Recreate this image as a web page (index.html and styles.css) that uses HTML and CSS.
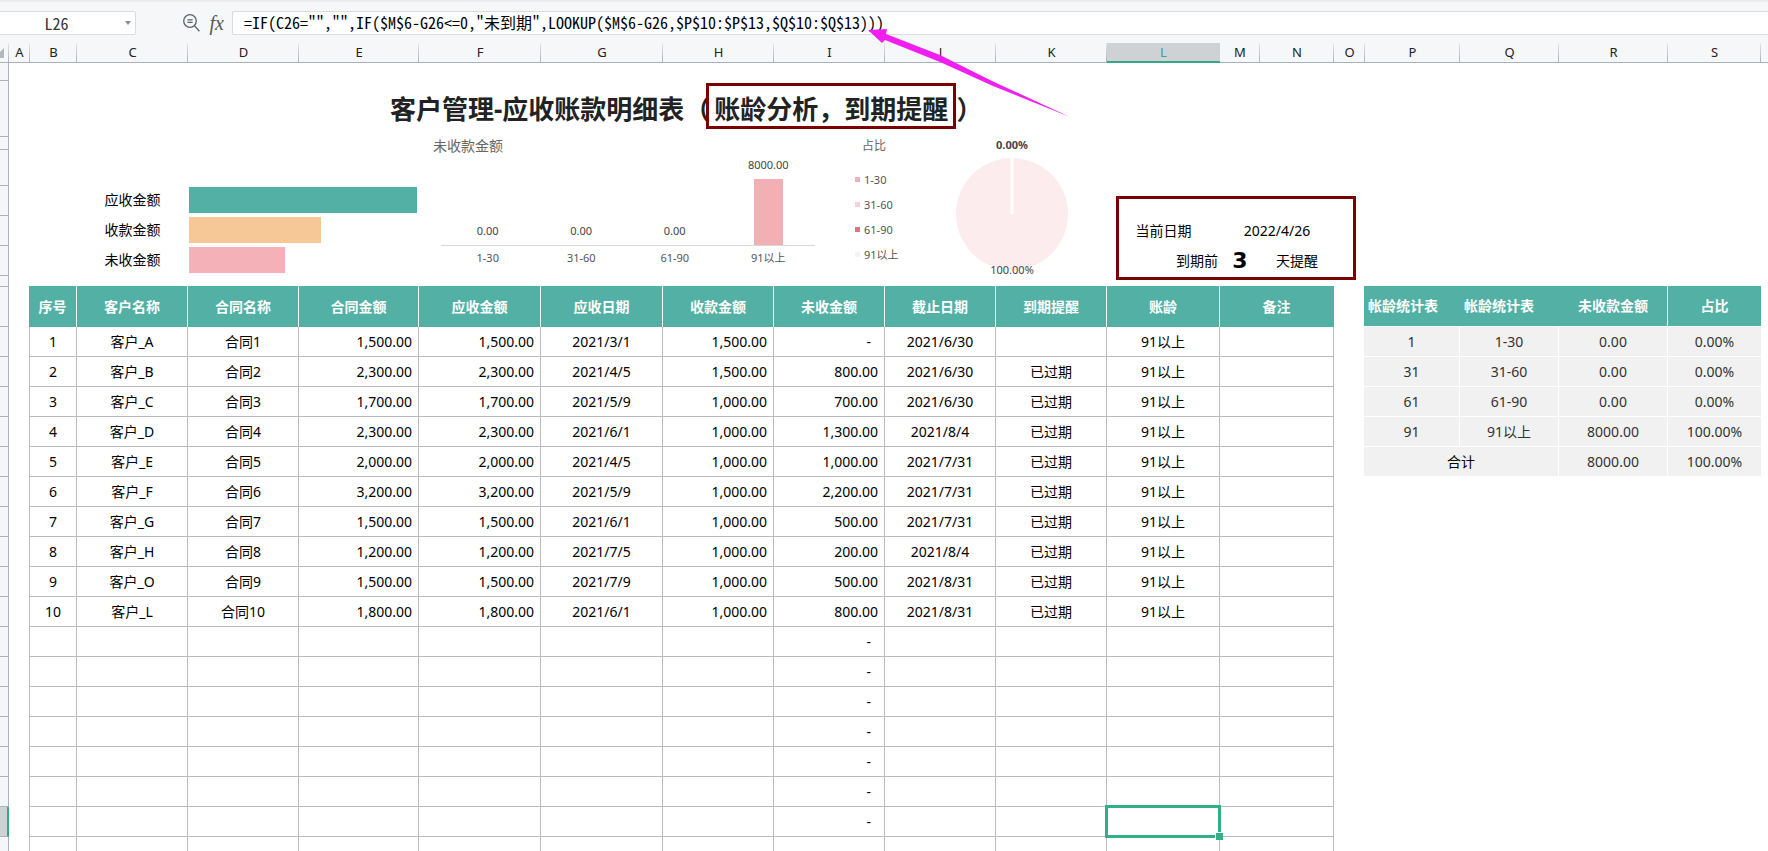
FILE: index.html
```html
<!DOCTYPE html>
<html lang="zh-CN">
<head>
<meta charset="utf-8">
<title>客户管理-应收账款明细表</title>
<link rel="stylesheet" href="styles.css">
</head>
<body>
<div class="app">
  <div class="toolbar">
    <div class="name-box">
      <input class="name-input" type="text" value="L26" aria-label="名称框">
      <button class="name-toggle" type="button" aria-label="展开名称"><svg width="6" height="4" viewBox="0 0 6 4"><path d="M0 0h6L3 4z" fill="#8a8d92"/></svg></button>
    </div>
    <div class="tools">
      <button class="tool" type="button" aria-label="查找"><svg width="17" height="18" viewBox="0 0 17 18" fill="none" stroke="#5d6167" stroke-width="1.3"><circle cx="7" cy="7" r="6.3"/><path d="M11.4 11.6l5 5.6M4.4 5.8h5.2M4.4 8.4h5.2"/></svg></button>
      <button class="tool tool-fx" type="button" aria-label="插入函数">fx</button>
    </div>
    <input class="formula" type="text" aria-label="编辑栏" value="=IF(C26=&quot;&quot;,&quot;&quot;,IF($M$6-G26&lt;=0,&quot;未到期&quot;,LOOKUP($M$6-G26,$P$10:$P$13,$Q$10:$Q$13)))">
  </div>

  <div class="col-heads">
    <div class="corner"><svg width="5" height="10" viewBox="0 0 5 10"><path d="M4 0v10H0V4z" fill="#b4b7bb"/></svg></div>
    <div class="ch">A</div><div class="ch">B</div><div class="ch">C</div><div class="ch">D</div><div class="ch">E</div><div class="ch">F</div><div class="ch">G</div><div class="ch">H</div><div class="ch">I</div><div class="ch">J</div><div class="ch">K</div><div class="ch ch-on">L</div><div class="ch">M</div><div class="ch">N</div><div class="ch">O</div><div class="ch">P</div><div class="ch">Q</div><div class="ch">R</div><div class="ch">S</div><div class="ch ch-last"></div>
  </div>

  <div class="sheet">
    <div class="gutter">
      <div class="rh rh-1"></div><div class="rh rh-2"></div><div class="rh rh-3"></div><div class="rh rh-4"></div><div class="rh"></div><div class="rh"></div><div class="rh"></div><div class="rh rh-8"></div><div class="rh rh-9"></div>
      <div class="rh"></div><div class="rh"></div><div class="rh"></div><div class="rh"></div><div class="rh"></div><div class="rh"></div><div class="rh"></div><div class="rh"></div><div class="rh"></div><div class="rh"></div><div class="rh"></div><div class="rh"></div><div class="rh"></div><div class="rh"></div><div class="rh"></div><div class="rh"></div><div class="rh rh-on"></div><div class="rh"></div>
    </div>
    <main class="content">
      <div class="title-row">
        <h1 class="title">客户管理-应收账款明细表（<span class="boxed">账龄分析，到期提醒</span>）</h1>
      </div>

      <section class="dash">
        <div class="totals">
          <div class="total"><span class="total-name">应收金额</span><div class="track"><div class="bar bar-due" style="width:100%"></div></div></div>
          <div class="total"><span class="total-name">收款金额</span><div class="track"><div class="bar bar-paid" style="width:57.9%"></div></div></div>
          <div class="total"><span class="total-name">未收金额</span><div class="track"><div class="bar bar-open" style="width:42.1%"></div></div></div>
        </div>

        <div class="columns">
          <h2 class="chart-title">未收款金额</h2>
          <div class="plot">
            <div class="slot"><span class="val">0.00</span></div>
            <div class="slot"><span class="val">0.00</span></div>
            <div class="slot"><span class="val">0.00</span></div>
            <div class="slot"><span class="val">8000.00</span><div class="column"></div></div>
          </div>
          <div class="cats"><span>1-30</span><span>31-60</span><span>61-90</span><span>91以上</span></div>
        </div>

        <div class="share">
          <div class="share-side">
            <h2 class="share-title">占比</h2>
            <ul class="legend">
              <li><i class="sw sw-1"></i>1-30</li>
              <li><i class="sw sw-2"></i>31-60</li>
              <li><i class="sw sw-3"></i>61-90</li>
              <li><i class="sw sw-4"></i>91以上</li>
            </ul>
          </div>
          <div class="pie-col">
            <span class="pie-label pie-zero">0.00%</span>
            <svg class="pie" width="112" height="112" viewBox="0 0 112 112"><circle cx="56" cy="56" r="56" fill="#fcecee"/><path d="M56 0v56" stroke="#fff" stroke-width="3"/></svg>
            <span class="pie-label pie-full">100.00%</span>
          </div>
        </div>

        <div class="remind">
          <span class="r-date-name">当前日期</span><span class="r-date">2022/4/26</span>
          <span class="r-before">到期前</span><b class="r-days">3</b><span class="r-after">天提醒</span>
        </div>
      </section>

      <section class="tables">
        <table class="ledger">
          <colgroup><col class="w-b"><col class="w-n"><col class="w-n"><col class="w-e"><col class="w-f"><col class="w-f"><col class="w-n"><col class="w-n"><col class="w-n"><col class="w-n"><col class="w-l"><col class="w-m"></colgroup>
          <thead><tr><th>序号</th><th>客户名称</th><th>合同名称</th><th>合同金额</th><th>应收金额</th><th>应收日期</th><th>收款金额</th><th>未收金额</th><th>截止日期</th><th>到期提醒</th><th>账龄</th><th>备注</th></tr></thead>
          <tbody>
            <tr><td>1</td><td>客户_A</td><td>合同1</td><td class="num">1,500.00</td><td class="num">1,500.00</td><td>2021/3/1</td><td class="num">1,500.00</td><td class="num dash-val">-</td><td>2021/6/30</td><td></td><td>91以上</td><td></td></tr>
            <tr><td>2</td><td>客户_B</td><td>合同2</td><td class="num">2,300.00</td><td class="num">2,300.00</td><td>2021/4/5</td><td class="num">1,500.00</td><td class="num">800.00</td><td>2021/6/30</td><td>已过期</td><td>91以上</td><td></td></tr>
            <tr><td>3</td><td>客户_C</td><td>合同3</td><td class="num">1,700.00</td><td class="num">1,700.00</td><td>2021/5/9</td><td class="num">1,000.00</td><td class="num">700.00</td><td>2021/6/30</td><td>已过期</td><td>91以上</td><td></td></tr>
            <tr><td>4</td><td>客户_D</td><td>合同4</td><td class="num">2,300.00</td><td class="num">2,300.00</td><td>2021/6/1</td><td class="num">1,000.00</td><td class="num">1,300.00</td><td>2021/8/4</td><td>已过期</td><td>91以上</td><td></td></tr>
            <tr><td>5</td><td>客户_E</td><td>合同5</td><td class="num">2,000.00</td><td class="num">2,000.00</td><td>2021/4/5</td><td class="num">1,000.00</td><td class="num">1,000.00</td><td>2021/7/31</td><td>已过期</td><td>91以上</td><td></td></tr>
            <tr><td>6</td><td>客户_F</td><td>合同6</td><td class="num">3,200.00</td><td class="num">3,200.00</td><td>2021/5/9</td><td class="num">1,000.00</td><td class="num">2,200.00</td><td>2021/7/31</td><td>已过期</td><td>91以上</td><td></td></tr>
            <tr><td>7</td><td>客户_G</td><td>合同7</td><td class="num">1,500.00</td><td class="num">1,500.00</td><td>2021/6/1</td><td class="num">1,000.00</td><td class="num">500.00</td><td>2021/7/31</td><td>已过期</td><td>91以上</td><td></td></tr>
            <tr><td>8</td><td>客户_H</td><td>合同8</td><td class="num">1,200.00</td><td class="num">1,200.00</td><td>2021/7/5</td><td class="num">1,000.00</td><td class="num">200.00</td><td>2021/8/4</td><td>已过期</td><td>91以上</td><td></td></tr>
            <tr><td>9</td><td>客户_O</td><td>合同9</td><td class="num">1,500.00</td><td class="num">1,500.00</td><td>2021/7/9</td><td class="num">1,000.00</td><td class="num">500.00</td><td>2021/8/31</td><td>已过期</td><td>91以上</td><td></td></tr>
            <tr><td>10</td><td>客户_L</td><td>合同10</td><td class="num">1,800.00</td><td class="num">1,800.00</td><td>2021/6/1</td><td class="num">1,000.00</td><td class="num">800.00</td><td>2021/8/31</td><td>已过期</td><td>91以上</td><td></td></tr>
            <tr><td></td><td></td><td></td><td></td><td></td><td></td><td></td><td class="num dash-val">-</td><td></td><td></td><td></td><td></td></tr>
            <tr><td></td><td></td><td></td><td></td><td></td><td></td><td></td><td class="num dash-val">-</td><td></td><td></td><td></td><td></td></tr>
            <tr><td></td><td></td><td></td><td></td><td></td><td></td><td></td><td class="num dash-val">-</td><td></td><td></td><td></td><td></td></tr>
            <tr><td></td><td></td><td></td><td></td><td></td><td></td><td></td><td class="num dash-val">-</td><td></td><td></td><td></td><td></td></tr>
            <tr><td></td><td></td><td></td><td></td><td></td><td></td><td></td><td class="num dash-val">-</td><td></td><td></td><td></td><td></td></tr>
            <tr><td></td><td></td><td></td><td></td><td></td><td></td><td></td><td class="num dash-val">-</td><td></td><td></td><td></td><td></td></tr>
            <tr><td></td><td></td><td></td><td></td><td></td><td></td><td></td><td class="num dash-val">-</td><td></td><td></td><td class="active-cell"></td><td></td></tr>
            <tr><td></td><td></td><td></td><td></td><td></td><td></td><td></td><td></td><td></td><td></td><td></td><td></td></tr>
          </tbody>
        </table>

        <table class="aging">
          <colgroup><col class="w-p"><col class="w-q"><col class="w-r"><col class="w-s"></colgroup>
          <thead><tr><th class="start">帐龄统计表</th><th class="start">帐龄统计表</th><th class="split">未收款金额</th><th>占比</th></tr></thead>
          <tbody>
            <tr><td>1</td><td>1-30</td><td>0.00</td><td>0.00%</td></tr>
            <tr><td>31</td><td>31-60</td><td>0.00</td><td>0.00%</td></tr>
            <tr><td>61</td><td>61-90</td><td>0.00</td><td>0.00%</td></tr>
            <tr><td>91</td><td>91以上</td><td>8000.00</td><td>100.00%</td></tr>
            <tr><td class="sum" colspan="2">合计</td><td>8000.00</td><td>100.00%</td></tr>
          </tbody>
        </table>
      </section>
    </main>
  </div>

  <svg class="arrow" width="204" height="90" viewBox="0 0 204 90"><path d="M0 1l19-1-1 5 54 21 53 26.5L202 88 125 57 72 33 17 11l-3 3z" fill="#f01ff0"/></svg>
</div>
</body>
</html>
```
FILE: styles.css
```css
* { box-sizing: border-box; }

body {
  margin: 0;
  background: #fff;
  color: #000;
  font: 14px/20px "Noto Sans", "Noto Sans CJK SC", sans-serif;
}

h1, h2, ul { margin: 0; padding: 0; font-weight: normal; }
button { border: 0; padding: 0; background: none; }

.app {
  position: relative;
  display: flex;
  flex-direction: column;
  height: 100vh;
  overflow: hidden;
}

/* formula bar */
.toolbar {
  display: flex;
  flex: none;
  height: 43px;
  padding: 11px 0 8px;
  background: linear-gradient(#e6e8ea, #f5f7f8 3px);
}

.name-box {
  display: flex;
  align-items: center;
  flex: none;
  width: 136px;
  padding-right: 2px;
  background: #fff;
  border: 1px solid #dadcdf;
  border-left: 0;
  border-radius: 0 2px 2px 0;
}

.name-input, .formula {
  min-width: 0;
  border: 0;
  outline: 0;
  background: #fff;
  color: #000;
  font: 16px/20px "Noto Sans CJK SC", sans-serif;
  font-feature-settings: "hwid";
}

.name-input {
  flex: 1;
  padding: 0 16px 0 0;
  color: #333;
  text-align: center;
  background: transparent;
  padding: 0 0 0 0;
}

.name-toggle { display: flex; flex: none; width: 8px; }
.name-input { padding-right: 12px; }

.tools {
  display: flex;
  align-items: center;
  justify-content: flex-end;
  gap: 10px;
  flex: none;
  width: 96px;
  padding-right: 8px;
}

.tool { display: flex; }

.tool-fx {
  color: #55585e;
  font: italic 20px/20px "Liberation Serif", serif;
}

.formula {
  flex: 1;
  padding: 0 0 2px 11px;
  border: 1px solid #dadcdf;
  border-right: 0;
  border-radius: 2px 0 0 2px;
}

/* column headings */
.col-heads {
  display: grid;
  flex: none;
  grid-template-columns: 9px 21fr 47fr 111fr 111fr 120fr 122fr 122fr 111fr 111fr 111fr 111fr 113fr 40fr 74fr 31fr 95fr 99fr 109fr 93fr 7fr;
  height: 20px;
  background: #f5f7f8;
  color: #222;
  font-size: 13px;
  line-height: 18px;
  text-align: center;
}

.corner, .ch {
  border-bottom: 1px solid #a9b1ba;
  background: linear-gradient(#e4e7ea, #a9b1ba) right / 1px 100% no-repeat;
}

.corner { display: flex; align-items: center; }

.ch-on {
  border-bottom: 2px solid #33a883;
  background: #cfd2d5;
  color: #33a883;
}

.ch-last { background: none; }

/* sheet */
.sheet { display: flex; flex: 1; min-height: 0; }

.gutter { flex: none; width: 9px; }

.rh {
  height: 30px;
  background: #f4f6f9;
  border-right: 1px solid #adb1bb;
  border-bottom: 1px solid #adb1bb;
}

.rh-1 { height: 18px; }
.rh-2 { height: 56px; }
.rh-3 { height: 13px; }
.rh-4 { height: 36px; }
.rh-8 { height: 11px; }
.rh-9 { height: 40px; }
.rh-on { background: #cfd2d5; border-right: 2px solid #33a883; }

.content { flex: 1; min-width: 0; }

.title-row {
  display: flex;
  align-items: center;
  justify-content: center;
  height: 74px;
  margin-right: 23%;
  padding: 20px 0 2px;
}

.title {
  color: #222;
  font: bold 26px/36px "Noto Sans", "Noto Sans CJK SC", sans-serif;
  white-space: nowrap;
}

.boxed { position: relative; margin: 0 8px 0 4px; }

.boxed::after {
  content: "";
  position: absolute;
  inset: -8px -8px -2px;
  border: 3px solid #7b0000;
}

/* dashboard */
.dash {
  display: grid;
  grid-template-columns: 68fr 342fr 422fr 275fr 240fr 412fr;
  height: 149px;
}

.totals { grid-column: 2; padding-top: 48px; }

.total {
  display: grid;
  grid-template-columns: 111fr 231fr;
  align-items: center;
  height: 30px;
}

.total-name { text-align: center; }
.track { padding: 0 2px 0 1px; }
.bar { height: 26px; }
.bar-due { background: #52b0a4; }
.bar-paid { background: #f6c797; }
.bar-open { background: #f4b1b7; }

.columns { padding: 0 26px 0 22px; color: #555; font-size: 11px; line-height: 16px; }

.chart-title {
  margin-left: -8px;
  color: #666;
  font-size: 14px;
  line-height: 17px;
}

.plot, .cats { display: grid; grid-template-columns: repeat(4, 1fr); text-align: center; }
.plot { height: 92px; border-bottom: 1px solid #d4d6d9; }
.slot { display: flex; flex-direction: column; align-items: center; justify-content: flex-end; }
.val { margin-bottom: 6px; color: #444; }
.column { width: 29px; height: 66px; background: #f2b0b5; }
.cats { padding-top: 4px; }

.share { display: flex; color: #555; font-size: 11px; line-height: 16px; }
.share-side { flex: none; width: 115px; padding-left: 14px; }
.share-title { padding-left: 7px; color: #666; font-size: 12px; line-height: 17px; }
.legend { margin-top: 13px; list-style: none; }
.legend li { display: flex; align-items: center; gap: 4px; height: 25px; }
.sw { width: 5px; height: 5px; }
.sw-1 { background: #eeafb8; }
.sw-2 { background: #f6d2da; }
.sw-3 { background: #dd7580; }
.sw-4 { background: #f7f3f4; }

.pie-col { display: flex; flex: none; flex-direction: column; align-items: center; width: 112px; }
.pie { margin-top: 5px; }
.pie-label { color: #444; }
.pie-zero { font-weight: bold; }
.pie-full { position: relative; margin-top: -8px; }

.remind {
  display: grid;
  grid-template-columns: 101fr 40fr 74fr 19fr;
  grid-template-rows: 30px 30px;
  align-items: center;
  height: 84px;
  margin-top: 59px;
  padding-top: 17px;
  border: 3px solid #7b0000;
  text-align: center;
  white-space: nowrap;
}

.r-date-name { padding-right: 12px; }
.r-date { grid-column: 2 / 4; }
.r-before { grid-column: 1; padding-right: 2px; text-align: right; }
.r-days { font: bold 22px/30px "DejaVu Sans", sans-serif; }

/* tables */
.tables {
  display: grid;
  grid-template-columns: 20fr 1305fr 30fr 397fr 7fr;
  align-items: start;
}

table {
  width: 100%;
  table-layout: fixed;
  border-collapse: separate;
  border-spacing: 0;
  text-align: center;
}

.ledger { grid-column: 2; }
.aging { grid-column: 4; }

.w-b { width: 48px; }
.w-n { width: 111px; }
.w-e { width: 120px; }
.w-f { width: 122px; }
.w-l { width: 113px; }
.w-m { width: 114px; }
.w-p { width: 96px; }
.w-q { width: 99px; }
.w-r { width: 109px; }
.w-s { width: 93px; }

th {
  height: 41px;
  padding: 0;
  background: #52b0a4;
  color: #fff;
  font-weight: bold;
}

td { height: 30px; padding: 0; }

.ledger th { border-right: 1px solid #fff; }
.ledger th:last-child { border-right-color: #52b0a4; }
.ledger td { border-right: 1px solid #bbb; border-bottom: 1px solid #bbb; }
.ledger td:first-child { border-left: 1px solid #bbb; }
.ledger .num { padding-right: 6px; text-align: right; }
.ledger .dash-val { padding-right: 13px; }

.aging th { border-bottom: 1px solid #fff; }
.aging .start { padding-left: 4px; text-align: left; }
.aging .split { border-right: 1px solid #fff; }

.aging td {
  background: #f1f1f1;
  border-right: 1px solid #fff;
  border-bottom: 1px solid #fff;
  color: #333;
}

.aging td:last-child { border-right: 0; }
.aging .sum { color: #000; }

.active-cell { position: relative; }

.active-cell::before {
  content: "";
  position: absolute;
  inset: -2px;
  z-index: 1;
  border: 3px solid #2fb085;
}

.active-cell::after {
  content: "";
  position: absolute;
  right: -4px;
  bottom: -4px;
  z-index: 2;
  width: 7px;
  height: 7px;
  border: 1px solid #fff;
  border-right: 0;
  border-bottom: 0;
  background: #2fb085;
}

.arrow {
  position: absolute;
  top: 29px;
  left: 868px;
}
```
